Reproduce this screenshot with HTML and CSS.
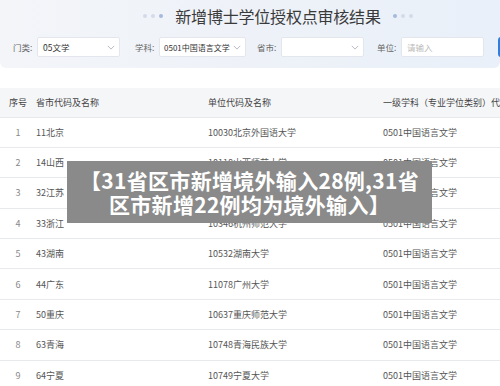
FILE: index.html
```html
<!DOCTYPE html>
<html lang="zh">
<head>
<meta charset="utf-8">
<link rel="stylesheet" href="styles.css">
</head>
<body>
<div class="page">
  <div class="panel">
    <div class="title">
      <span class="dots"><i></i><i></i><i class="strong"></i></span>
      <h1>新增博士学位授权点审核结果</h1>
      <span class="dots"><i class="strong"></i><i></i><i></i></span>
    </div>
    <div class="filters">
      <label class="lbl">门类:</label>
      <div class="sel s1"><span>05文学</span><svg viewBox="0 0 10 6"><path d="M1 1l4 4 4-4"/></svg></div>
      <label class="lbl l2">学科:</label>
      <div class="sel s2"><span>0501中国语言文学</span><svg viewBox="0 0 10 6"><path d="M1 1l4 4 4-4"/></svg></div>
      <label class="lbl l3">省市:</label>
      <div class="sel s3"><span></span><svg viewBox="0 0 10 6"><path d="M1 1l4 4 4-4"/></svg></div>
      <label class="lbl l4">单位:</label>
      <div class="sel s4"><span class="ph">请输入</span></div>
      <div class="btn"></div>
    </div>
  </div>
  <table class="tbl">
    <thead>
      <tr><th class="c1">序号</th><th class="c2">省市代码及名称</th><th class="c3">单位代码及名称</th><th class="c4">一级学科（专业学位类别）代码及名称</th></tr>
    </thead>
    <tbody>
      <tr><td class="c1">1</td><td>11北京</td><td>10030北京外国语大学</td><td>0501中国语言文学</td></tr>
      <tr><td class="c1">2</td><td>14山西</td><td>10118山西师范大学</td><td>0501中国语言文学</td></tr>
      <tr><td class="c1">3</td><td>32江苏</td><td>10320江苏师范大学</td><td>0501中国语言文学</td></tr>
      <tr><td class="c1">4</td><td>33浙江</td><td>10346杭州师范大学</td><td>0501中国语言文学</td></tr>
      <tr><td class="c1">5</td><td>43湖南</td><td>10532湖南大学</td><td>0501中国语言文学</td></tr>
      <tr><td class="c1">6</td><td>44广东</td><td>11078广州大学</td><td>0501中国语言文学</td></tr>
      <tr><td class="c1">7</td><td>50重庆</td><td>10637重庆师范大学</td><td>0501中国语言文学</td></tr>
      <tr><td class="c1">8</td><td>63青海</td><td>10748青海民族大学</td><td>0501中国语言文学</td></tr>
      <tr><td class="c1">9</td><td>64宁夏</td><td>10749宁夏大学</td><td>0501中国语言文学</td></tr>
    </tbody>
  </table>
  <div class="banner">【31省区市新增境外输入28例,31省<br>区市新增22例均为境外输入】</div>
</div>
</body>
</html>
```

FILE: styles.css
```css
* { box-sizing: border-box; }
html, body { margin: 0; padding: 0; }
body {
  width: 500px;
  height: 386px;
  overflow: hidden;
  background: #fff;
  font-family: "Noto Sans CJK SC", "Noto Sans", sans-serif;
}
.page { position: relative; width: 500px; height: 386px; overflow: hidden; }
.panel {
  height: 68px;
  background: linear-gradient(90deg, #f3f5f9 0%, #eef2f8 50%, #e9f0f9 100%);
  border-radius: 0 0 6px 6px;
  padding-top: 4px;
}
.title {
  display: flex;
  justify-content: center;
  align-items: center;
  gap: 12px;
  height: 24px;
  padding-left: 56px;
}
.title h1 {
  margin: 0;
  font-size: 16px;
  font-weight: 400;
  color: #3a3a3a;
  letter-spacing: -0.2px;
}
.dots { display: flex; gap: 4px; align-items: center; }
.dots i { width: 4px; height: 4px; border-radius: 50%; background: #d3dbea; display: block; }
.dots i.strong { background: #a7b9dd; }
.filters {
  display: flex;
  align-items: center;
  margin-top: 9px;
  padding-left: 13px;
  height: 20px;
  overflow: hidden;
}
.filters > * { flex-shrink: 0; }
.lbl { font-size: 8.5px; color: #666; width: 24px; }
.l2 { margin-left: 15px; }
.l3 { margin-left: 11px; }
.l4 { margin-left: 13px; }
.sel {
  height: 20px;
  background: #fff;
  border: 1px solid #e3e6ec;
  border-radius: 2px;
  display: flex;
  align-items: center;
  justify-content: space-between;
  padding: 0 4px 0 5px;
  font-size: 8.5px;
  color: #333;
  white-space: nowrap;
}
.s1 { width: 83px; }
.s2 { width: 87px; padding-left: 4px; font-size: 8px; }
.s3 { width: 83px; }
.s4 { width: 83px; }
.sel .ph { color: #bbb; }
.sel svg { width: 8px; height: 5px; fill: none; stroke: #aab; stroke-width: 1; flex-shrink: 0; }
.btn {
  margin-left: 14px;
  width: 20px;
  height: 20px;
  background: #2a7fe0;
  border-radius: 3px;
}
.tbl {
  margin-top: 20px;
  width: 100%;
  border-collapse: collapse;
  table-layout: fixed;
  font-size: 9px;
}
.tbl th {
  background: #f5f6f8;
  height: 29px;
  font-weight: 400;
  color: #444;
  text-align: left;
  padding: 0;
  white-space: nowrap;
  overflow: hidden;
}
.tbl td {
  height: 30.4px;
  color: #555;
  padding: 0;
  border-top: 1px solid #e8e9ec;
  white-space: nowrap;
}
.tbl .c1 { width: 36px; text-align: center; padding-left: 0; }
.tbl td.c1 { color: #888; }
.tbl .c2 { width: 172px; }
.tbl .c3 { width: 175px; }
.banner {
  position: absolute;
  left: 67px;
  top: 161px;
  width: 365px;
  height: 62px;
  background: #8a8a8a;
  color: #fff;
  font-weight: 700;
  font-size: 21px;
  line-height: 24px;
  text-align: center;
  padding-top: 7px;
  letter-spacing: 0.3px;
  white-space: nowrap;
}
```
